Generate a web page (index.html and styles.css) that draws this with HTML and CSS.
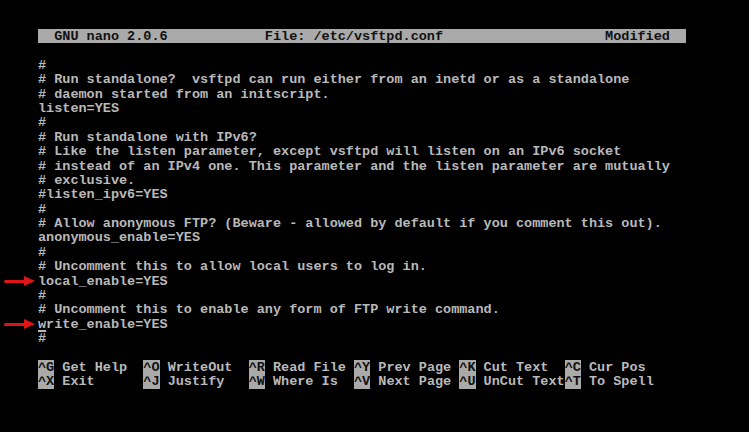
FILE: index.html
```html
<!DOCTYPE html>
<html lang="en">
<head>
    <meta charset="UTF-8">
    <meta name="viewport" content="width=device-width, initial-scale=1.0">
    <title>GNU nano 2.0.6</title>
    <link rel="stylesheet" href="styles.css">
</head>
<body>
    <div class="screen">
        <div class="term">
            <div class="row titlebar">  GNU nano 2.0.6            File: /etc/vsftpd.conf                    Modified  </div>
            <div class="row"></div>
            <div class="row">#</div>
            <div class="row"># Run standalone?  vsftpd can run either from an inetd or as a standalone</div>
            <div class="row"># daemon started from an initscript.</div>
            <div class="row">listen=YES</div>
            <div class="row">#</div>
            <div class="row"># Run standalone with IPv6?</div>
            <div class="row"># Like the listen parameter, except vsftpd will listen on an IPv6 socket</div>
            <div class="row"># instead of an IPv4 one. This parameter and the listen parameter are mutually</div>
            <div class="row"># exclusive.</div>
            <div class="row">#listen_ipv6=YES</div>
            <div class="row">#</div>
            <div class="row"># Allow anonymous FTP? (Beware - allowed by default if you comment this out).</div>
            <div class="row">anonymous_enable=YES</div>
            <div class="row">#</div>
            <div class="row"># Uncomment this to allow local users to log in.</div>
            <div class="row marked">local_enable=YES</div>
            <div class="row">#</div>
            <div class="row"># Uncomment this to enable any form of FTP write command.</div>
            <div class="row marked"><span class="cursor">w</span>rite_enable=YES</div>
            <div class="row">#</div>
            <div class="row"></div>
            <div class="row"><span class="key">^G</span> Get Help  <span class="key">^O</span> WriteOut  <span class="key">^R</span> Read File <span class="key">^Y</span> Prev Page <span class="key">^K</span> Cut Text  <span class="key">^C</span> Cur Pos</div>
            <div class="row"><span class="key">^X</span> Exit      <span class="key">^J</span> Justify   <span class="key">^W</span> Where Is  <span class="key">^V</span> Next Page <span class="key">^U</span> UnCut Text<span class="key">^T</span> To Spell</div>
        </div>
    </div>
</body>
</html>
```

FILE: styles.css
```css
body { margin: 0; background: #000; }
.screen { width: 749px; height: 432px; background: #000; }
.term {
    padding: 29px 0 0 38px;
    font-family: "Liberation Mono", "DejaVu Sans Mono", monospace;
    font-weight: bold;
    font-size: 13.5px;
    color: #b9b9b9;
}
.row { height: 14.4px; line-height: 15.5px; white-space: pre; position: relative; }
.titlebar { width: 648px; background: #aaaaaa; color: #111; line-height: 14.4px; padding-top: 0; }
.titlebar { height: 13.4px; padding-top: 1px; }
.key { background: #aaaaaa; color: #111; }
.cursor { text-decoration: underline; text-underline-offset: 2px; text-decoration-thickness: 2px; }

/* red arrows drawn over the left margin */
.marked::before {
    content: "";
    position: absolute;
    left: -34px;
    top: 6px;
    width: 22px;
    height: 3px;
    background: #e01414;
    border-radius: 2px;
}
.marked::after {
    content: "";
    position: absolute;
    left: -14px;
    top: 2.5px;
    border-left: 11px solid #e01414;
    border-top: 5px solid transparent;
    border-bottom: 5px solid transparent;
}
```
